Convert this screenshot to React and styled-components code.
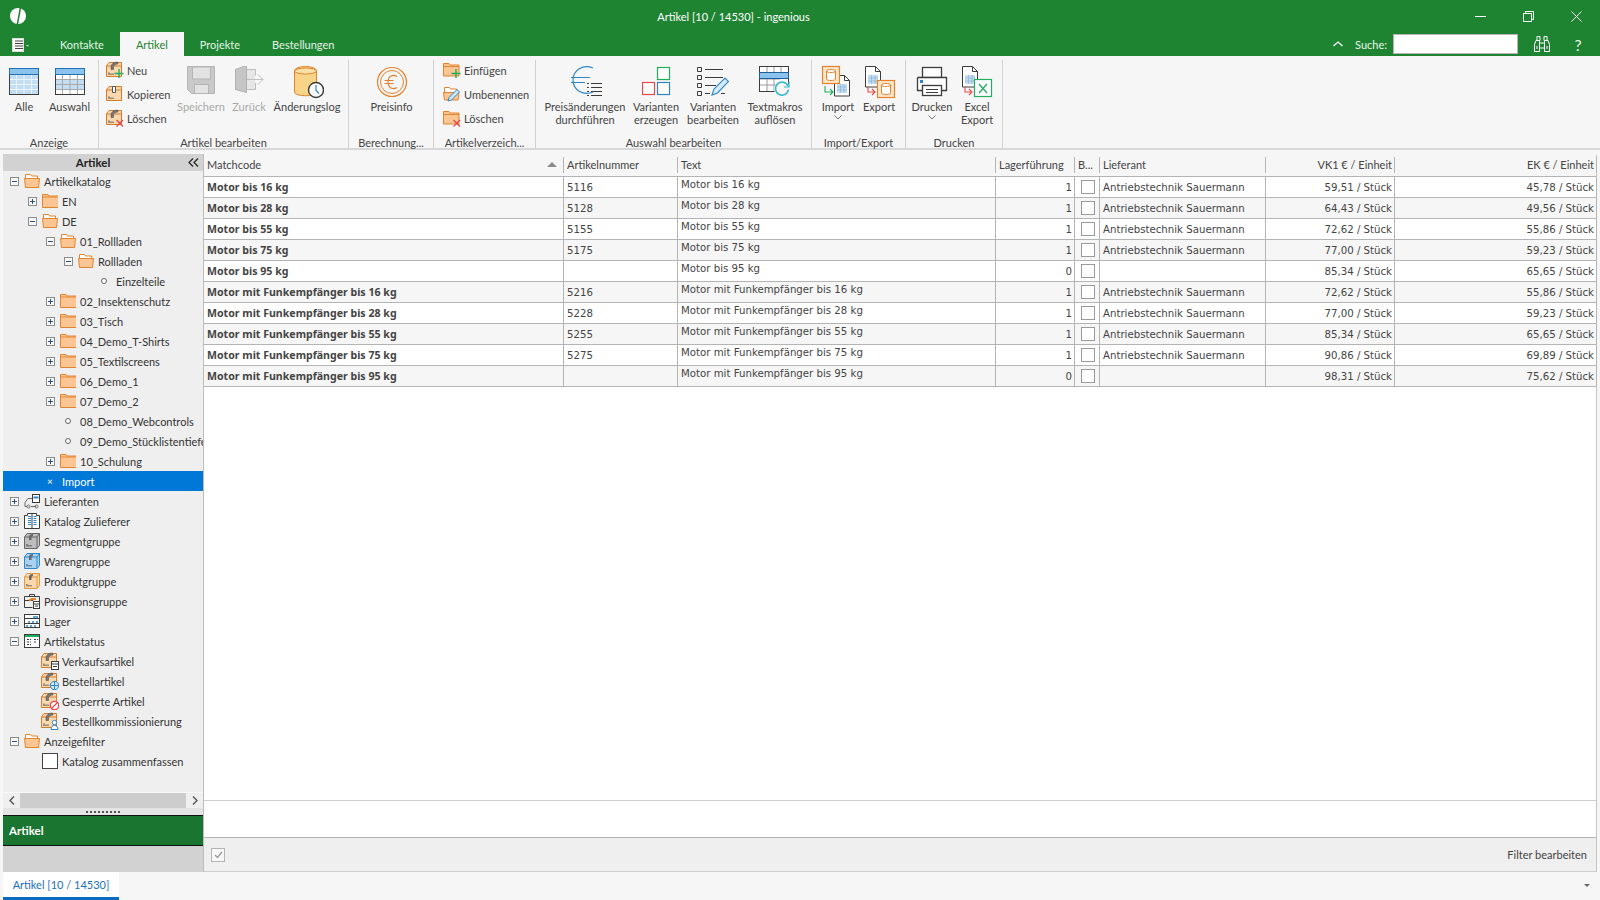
import React from 'react';
import styled, { createGlobalStyle } from 'styled-components';

const GlobalStyle = createGlobalStyle`
  html, body { margin: 0; padding: 0; height: 100%; overflow: hidden; }
  body { font-family: Lato, "Liberation Sans", sans-serif; font-size: 11px; color: #444; }
  svg { flex: none; }
`;

const GREEN = '#1e8432';

const Window = styled.div`
  width: 1600px;
  height: 900px;
  display: flex;
  flex-direction: column;
  background: #f6f6f6;
  overflow: hidden;
`;

const TitleBar = styled.header`
  height: 32px;
  flex: none;
  display: flex;
  align-items: center;
  background: ${GREEN};
  color: #fff;
`;

const Logo = styled.div`
  width: 36px;
  padding-left: 10px;
  display: flex;
  flex: none;
`;

const Title = styled.div`
  flex: 1;
  text-align: center;
  font-size: 11px;
  padding-right: 35px;
`;

const WinControls = styled.div`
  display: flex;
  flex: none;
  width: 144px;
`;

const WinButton = styled.div`
  width: 48px;
  height: 32px;
  display: flex;
  align-items: center;
  justify-content: center;
`;

const TabRow = styled.nav`
  height: 24px;
  flex: none;
  display: flex;
  align-items: stretch;
  background: ${GREEN};
`;

const AppMenu = styled.div`
  width: 44px;
  flex: none;
  display: flex;
  align-items: center;
  padding: 1px 0 0 12px;
  box-sizing: border-box;
`;

const Tab = styled.div`
  padding: 0 16px;
  display: flex;
  align-items: center;
  font-size: 11px;
  color: ${(p) => (p.$active ? GREEN : '#e4f4e6')};
  background: ${(p) => (p.$active ? '#f6f6f6' : 'transparent')};
`;

const TabTools = styled.div`
  margin-left: auto;
  display: flex;
  align-items: center;
  padding-right: 4px;
  color: #e8f6ea;
`;

const SearchLabel = styled.span`
  margin: 0 6px 0 12px;
  font-size: 11px;
`;

const SearchInput = styled.div`
  width: 123px;
  height: 18px;
  background: #fff;
  border: 1px solid #b5b5b5;
`;

const ToolIcon = styled.div`
  width: 36px;
  display: flex;
  justify-content: center;
  font-size: 16px;
  margin-left: ${(p) => p.$ml || 0}px;
`;

const Ribbon = styled.div`
  height: 94px;
  flex: none;
  display: flex;
  padding-top: 4px;
  box-sizing: border-box;
  background: #f6f6f6;
  border-bottom: 2px solid #d8d8d8;
`;

const Group = styled.section`
  width: ${(p) => p.$w}px;
  height: 88px;
  box-sizing: border-box;
  flex: none;
  display: flex;
  flex-direction: column;
  border-right: 1px solid #d2d2d2;
`;

const GroupBody = styled.div`
  height: 76px;
  flex: none;
  display: flex;
  padding-left: ${(p) => p.$pad || 0}px;
`;

const GroupLabel = styled.div`
  height: 12px;
  line-height: 14px;
  text-align: center;
  font-size: 11px;
  white-space: nowrap;
`;

const LargeButton = styled.div`
  width: ${(p) => p.$w}px;
  flex: none;
  display: flex;
  flex-direction: column;
  align-items: center;
  color: ${(p) => (p.$disabled ? '#a9a9a9' : '#444')};
`;

const LargeIcon = styled.div`
  height: 40px;
  padding-top: 3px;
  box-sizing: border-box;
  display: flex;
  align-items: center;
  justify-content: center;
`;

const LargeText = styled.div`
  font-size: 11px;
  line-height: 13px;
  text-align: center;
  white-space: pre-line;
`;

const Caret = styled.div`
  height: 10px;
  display: flex;
  justify-content: center;
  padding-top: 2px;
`;

const SmallColumn = styled.div`
  width: ${(p) => p.$w}px;
  flex: none;
  display: flex;
  flex-direction: column;
  gap: 2px;
  margin-top: -1px;
`;

const SmallButton = styled.div`
  height: 22px;
  display: flex;
  align-items: center;
  gap: 3px;
  font-size: 11px;
  white-space: nowrap;
`;

const Main = styled.main`
  flex: 1;
  min-height: 0;
  display: flex;
  padding: 4px 3px 0;
`;

const Sidebar = styled.aside`
  width: 200px;
  flex: none;
  display: flex;
  flex-direction: column;
  background: #efefef;
  border-right: 1px solid #bdbdbd;
`;

const SideHead = styled.div`
  height: 17px;
  flex: none;
  display: flex;
  align-items: center;
  background: #d2d2d2;
  color: #222;
`;

const SideTitle = styled.div`
  flex: 1;
  text-align: center;
  font-weight: 700;
  font-size: 11.5px;
`;

const CollapseBtn = styled.div`
  width: 20px;
  display: flex;
  justify-content: center;
`;

const Tree = styled.div`
  flex: 1;
  min-height: 0;
  overflow: hidden;
`;

const TreeRow = styled.div`
  height: 20px;
  display: flex;
  align-items: center;
  padding-left: ${(p) => 5 + p.$level * 18}px;
  white-space: nowrap;
  color: ${(p) => (p.$selected ? '#fff' : '#333')};
  background: ${(p) => (p.$selected ? '#0078d7' : 'transparent')};
`;

const Expander = styled.span`
  width: 9px;
  height: 9px;
  flex: none;
  margin: 0 5px 0 2px;
  box-sizing: border-box;
  border: 1px solid #8c8c8c;
  background: #f7f7f7;
  position: relative;
  visibility: ${(p) => (p.$kind ? 'visible' : 'hidden')};
  &::before {
    content: "";
    position: absolute;
    left: 1px;
    right: 1px;
    top: 3px;
    height: 1px;
    background: #33507a;
  }
  &::after {
    content: "";
    display: ${(p) => (p.$kind === 'plus' ? 'block' : 'none')};
    position: absolute;
    top: 1px;
    bottom: 1px;
    left: 3px;
    width: 1px;
    background: #33507a;
  }
`;

const NodeIcon = styled.span`
  width: 16px;
  height: 16px;
  flex: none;
  margin-right: 4px;
  display: flex;
  align-items: center;
  justify-content: center;
`;

const Dot = styled.span`
  width: 4px;
  height: 4px;
  border: 1px solid #666;
  background: #fff;
  border-radius: 50%;
`;

const Mark = styled.span`
  font-size: 10px;
  line-height: 10px;
  color: #fff;
`;

const CheckNode = styled.span`
  width: 16px;
  height: 16px;
  flex: none;
  box-sizing: border-box;
  background: #fff;
  border: 1px solid #444;
`;

const HScroll = styled.div`
  height: 15px;
  flex: none;
  display: flex;
  align-items: center;
  border-top: 1px solid #f8f8f8;
`;

const ScrollArrow = styled.div`
  width: 17px;
  display: flex;
  justify-content: center;
`;

const ScrollThumb = styled.div`
  flex: 1;
  height: 15px;
  background: #cdcdcd;
`;

const Splitter = styled.div`
  height: 7px;
  flex: none;
  display: flex;
  align-items: center;
  justify-content: center;
  background: #e4e4e4;
  &::before {
    content: "";
    width: 35px;
    height: 2px;
    background: repeating-linear-gradient(90deg, #555 0 2px, transparent 2px 4px);
  }
`;

const NavBand = styled.div`
  height: 29px;
  flex: none;
  display: flex;
  align-items: center;
  padding-left: 6px;
  background: #1a7530;
  border-top: 1px solid #111;
  border-bottom: 1px solid #111;
  color: #fff;
  font-weight: 700;
  font-size: 11.5px;
`;

const NavRest = styled.div`
  height: 26px;
  flex: none;
  background: #d2d2d2;
`;

const Content = styled.div`
  flex: 1;
  min-width: 0;
  display: flex;
  flex-direction: column;
  margin-top: 1px;
  background: #fff;
  border-right: 1px solid #c4c4c4;
`;

const COLS = '360px 114px 318px 79px 25px 166px 129px 202px';

const HeadRow = styled.div`
  display: grid;
  grid-template-columns: ${COLS};
  height: 22px;
  flex: none;
  box-sizing: border-box;
  background: #f6f6f6;
  border-bottom: 1px solid #b4b4b4;
`;

const HeadCell = styled.div`
  position: relative;
  padding: 0 ${(p) => (p.$right ? 2 : 3)}px 0 3px;
  line-height: 15px;
  margin: 2px 0 3px;
  border-right: 1px solid #b4b4b4;
  text-align: ${(p) => (p.$right ? 'right' : 'left')};
  font-size: 11px;
  white-space: nowrap;
  overflow: hidden;
`;

const SortArrow = styled.span`
  position: absolute;
  right: 6px;
  top: 5px;
  border-left: 5px solid transparent;
  border-right: 5px solid transparent;
  border-bottom: 5px solid #8c8c8c;
`;

const DataRow = styled.div`
  display: grid;
  grid-template-columns: ${COLS};
  height: 21px;
  box-sizing: border-box;
  background: ${(p) => (p.$alt ? '#f6f6f6' : '#fff')};
  border-bottom: 1px solid #b4b4b4;
`;

const Cell = styled.div`
  padding: ${(p) => (p.$bold || p.$top ? 0 : 1)}px ${(p) => (p.$right ? 2 : 3)}px 0 3px;
  display: flex;
  align-items: ${(p) => (p.$top ? 'flex-start' : 'center')};
  justify-content: ${(p) => (p.$right ? 'flex-end' : 'flex-start')};
  border-right: 1px solid #b4b4b4;
  font-family: ${(p) => (p.$bold ? '"Noto Sans"' : '"DejaVu Sans"')}, sans-serif;
  font-size: ${(p) => (p.$bold ? '10.6px' : '10.2px')};
  line-height: ${(p) => (p.$top ? '16px' : '19px')};
  font-weight: ${(p) => (p.$bold ? 700 : 400)};
  white-space: nowrap;
  overflow: hidden;
  color: #444;
`;

const RowCheck = styled.span`
  width: 14px;
  height: 14px;
  margin: -1px 0 0 3px;
  box-sizing: border-box;
  background: #fff;
  border: 1px solid #9a9a9a;
`;

const GridBody = styled.div`
  flex: 1;
  min-height: 0;
  border-bottom: 1px solid #cfcfcf;
`;

const EmptyStrip = styled.div`
  height: 36px;
  flex: none;
  border-bottom: 1px solid #b4b4b4;
`;

const FilterBar = styled.div`
  height: 33px;
  flex: none;
  display: flex;
  align-items: center;
  justify-content: space-between;
  padding: 0 9px 0 7px;
  background: #efefef;
  border-bottom: 1px solid #cfcfcf;
`;

const FilterCheck = styled.span`
  width: 14px;
  height: 14px;
  box-sizing: border-box;
  border: 1px solid #b4b4b4;
  background: #f8f8f8;
  display: flex;
  align-items: center;
  justify-content: center;
`;

const StatusBar = styled.footer`
  height: 28px;
  flex: none;
  display: flex;
  align-items: stretch;
  padding-left: 3px;
  background: #f6f6f6;
`;

const DocTab = styled.div`
  width: 116px;
  box-sizing: border-box;
  display: flex;
  align-items: center;
  justify-content: center;
  background: #fff;
  border-bottom: 3px solid #0a6cc0;
  color: #1a6fc0;
  font-size: 11px;
`;

const StatusDrop = styled.div`
  margin-left: auto;
  width: 16px;
  display: flex;
  align-items: center;
  padding-bottom: 1px;
  &::before {
    content: "";
    border-left: 3px solid transparent;
    border-right: 3px solid transparent;
    border-top: 3px solid #666;
  }
`;

/* ---- drawings ---- */

const Svg = ({ s = 32, w, h, children }) => (
  <svg width={w || s} height={h || s} viewBox={`0 0 ${w || s} ${h || s}`} fill="none">{children}</svg>
);

const DARK = '#3c3c3c';
const ORANGE = '#e4832f';
const BLUE = '#2e86c8';
const RED = '#e8474b';
const GR = '#1fae5b';

const SheetIcon = ({ all }) => (
  <Svg w={30} h={30}>
    <rect x="0.5" y="1.5" width="29" height="26" fill={all ? '#c3def2' : '#fff'} stroke={DARK} />
    {!all && <rect x="1" y="12" width="28" height="10" fill="#c3def2" />}
    <rect x="0.5" y="1.5" width="29" height="6" fill="#8cc3ec" stroke="#2372b8" />
    <path d="M1 12.5h28M1 17.5h28M1 22.5h28M7.5 8v19M15 8v19M22.5 8v19" stroke={all ? '#eaf4fb' : '#a9a9a9'} />
  </Svg>
);

const Overlay = ({ kind }) => {
  if (kind === 'plus') return <path d="M13 8v9M8.500 12.500h9" stroke={GR} strokeWidth="1.400" />;
  if (kind === 'x') return <path d="M10.500 11l6.500 6.500M17 11l-6.500 6.500" stroke={RED} strokeWidth="1.300" />;
  if (kind === 'calc') return <g><rect x="10.500" y="9.500" width="7" height="8" fill="#fff" stroke={DARK} /><path d="M11 12h6M12 14.500h4" stroke={DARK} /></g>;
  if (kind === 'globe') return <g><circle cx="13.500" cy="13.500" r="4.200" fill="#cfe6f7" stroke={BLUE} /><path d="M9.500 13.500h8M13.500 9.500v8" stroke={BLUE} /></g>;
  if (kind === 'ban') return <g><circle cx="13.500" cy="13.500" r="4.200" fill="#fff" stroke={RED} strokeWidth="1.300" /><path d="M10.500 16.500l6-6" stroke={RED} strokeWidth="1.300" /></g>;
  if (kind === 'person') return <g><circle cx="13.500" cy="10.500" r="2.200" fill="#fff" stroke={BLUE} /><path d="M10 17.500c.3-3 1.400-4 3.500-4s3.200 1 3.500 4z" fill="#fff" stroke={BLUE} /></g>;
  return null;
};

const BoxIcon = ({ overlay, straight }) => (
  <Svg s={18}>
    <path d="M.5 5L3 1.500h12.500v14H.5z" fill="#fbd8ad" stroke="#d87a2c" />
    <path d="M.5 5H15" stroke="#d87a2c" />
    {straight
      ? <path d="M6.500 1.500h3v6h-3z" fill="#fff" stroke="#555" />
      : <path d="M5 5.500C5.500 3 7.500 1 11.500 1l.5 2C9.500 3 8 4.200 7.500 5.500v3H5z" fill="#777" stroke="#555" strokeWidth=".6" />}
    <path d="M3 11.500v2.500M5 12.500v1.500M7 12.500v1.500" stroke="#444" />
    <Overlay kind={overlay} />
  </Svg>
);

const SegBox = ({ line, fill }) => (
  <Svg s={16}>
    <path d="M.5 4L3 .5h12.500v12l-2.500 3H.5z" fill={fill} stroke={line} />
    <path d="M.5 4H13v11.500M13 4l2.500-3.500" stroke={line} />
    <path d="M5 4c0-2 1.500-3 4-3v1.500L7.500 4v3H5z" fill="#666" />
    <path d="M3 11v2.500M5 12v1.500M7 12v1.500" stroke="#444" />
  </Svg>
);

const FolderIcon = ({ open, overlay, pen }) => (
  <Svg s={18}>
    {open ? (
      <g>
        <path d="M1.500 8V2.500h5l1 1.500h6V8" fill="#fff" stroke={ORANGE} />
        <path d="M.5 7.500h15.500l-1 7.500H1.500z" fill="#fbc795" stroke={ORANGE} />
      </g>
    ) : (
      <g>
        <path d="M.5 15V2.500h5.500l1 1.500h9v11z" fill="#fcc694" stroke={ORANGE} />
        <path d="M.5 5.500h15.500" stroke={ORANGE} />
      </g>
    )}
    {pen && <path d="M5 16l1-3.500 8-8 2.500 2.500-8 8z" fill="#cfe6f7" stroke={BLUE} />}
    <Overlay kind={overlay} />
  </Svg>
);

const TreeFolder = ({ open }) => (
  <Svg s={16}>
    {open ? (
      <g>
        <path d="M1.500 6V1.500h5l1 1.500h6V6" fill="#fff" stroke={ORANGE} />
        <path d="M.5 5.500h15l-1 9h-13z" fill="#fcc694" stroke={ORANGE} />
      </g>
    ) : (
      <g>
        <path d="M.5 14.500V1.500h5.500l1 1.500h9.500v11.500z" fill="#fcc694" stroke={ORANGE} />
        <path d="M.5 4h15.500" stroke={ORANGE} />
      </g>
    )}
  </Svg>
);

const SaveIcon = () => (
  <Svg>
    <g transform="translate(0 -3)">
      <path d="M2.500 3.500h27v27h-23l-4-4z" fill="#c9c9c9" stroke="#b5b5b5" />
      <rect x="7.500" y="4" width="18" height="12" fill="#e2e2e2" stroke="#b5b5b5" />
      <rect x="9.500" y="21.500" width="14" height="9" fill="#e2e2e2" stroke="#b5b5b5" />
    </g>
  </Svg>
);

const BackIcon = () => (
  <Svg>
    <g transform="translate(-1 -3)">
      <path d="M3.500 6.500l11-4v27l-11-3z" fill="#c6c6c6" stroke="#b0b0b0" />
      <path d="M14.500 6.500h9v6M23.500 20v6.500h-9" fill="#e4e4e4" stroke="#bdbdbd" />
      <rect x="15" y="7" width="8" height="19" fill="#e6e6e6" />
      <path d="M15 16.500h16M26 11.500l5 5-5 5" stroke="#c0c0c0" />
    </g>
  </Svg>
);

const LogIcon = () => (
  <Svg w={34} h={34}>
    <path d="M4.500 6c0-6 22-6 22 0v21c0 5-22 5-22 0z" fill="#f8d488" stroke={ORANGE} />
    <ellipse cx="15.500" cy="6" rx="11" ry="3" fill="#fbe1a8" stroke={ORANGE} />
    <circle cx="26" cy="25" r="7.500" fill="#fff" stroke={DARK} strokeWidth="1.400" />
    <path d="M26 20v5.500l3 3" stroke={BLUE} strokeWidth="1.200" />
  </Svg>
);

const EuroCoin = () => (
  <Svg>
    <circle cx="16" cy="16" r="14.500" stroke={ORANGE} strokeWidth="1.200" />
    <circle cx="16" cy="16" r="11.500" stroke={ORANGE} />
    <path d="M21 10.500c-4-2.500-9-.5-9 5.500s5 8 9 5.500M8.500 14.500h9M8.500 17.500h9" stroke={ORANGE} strokeWidth="1.200" />
  </Svg>
);

const EuroList = () => (
  <Svg w={34} h={34}>
    <path d="M25 3C15-1 5 5 5 15s10 16 20 12" stroke={BLUE} strokeWidth="1.200" />
    <path d="M3 12.500h19M3 17.500h14" stroke={BLUE} strokeWidth="1.200" />
    <path d="M19 18.500h2M23 18.500h11M19 22.500h2M23 22.500h11M19 26.500h2M23 26.500h11M19 30.500h2M23 30.500h11" stroke={DARK} strokeWidth="1.200" />
  </Svg>
);

const VariantSquares = () => (
  <Svg w={29} h={32}>
    <rect x="15.500" y="1.500" width="12" height="12" fill="#fff" stroke={GR} strokeWidth="1.200" />
    <rect x="0.500" y="16.500" width="12" height="12" fill="#fff" stroke={RED} strokeWidth="1.200" />
    <rect x="15.500" y="16.500" width="12" height="12" fill="#fff" stroke={BLUE} strokeWidth="1.200" />
  </Svg>
);

const VariantEdit = () => (
  <Svg w={32} h={32}>
    <path d="M.5 1.500h4v4h-4zM.5 9.500h4v4h-4zM.5 17.500h4v4h-4zM.5 25.500h4v4h-4z" stroke={DARK} />
    <path d="M8 3.500h18M8 11.500h18M8 19.500h11M8 27.500h5M24 27.500h4" stroke={DARK} strokeWidth="1.200" />
    <path d="M15 29l2-6L28 12l3.500 3.500L20.500 27z" fill="#d7ecfa" stroke={BLUE} strokeWidth="1.100" />
  </Svg>
);

const MacroIcon = () => (
  <Svg w={32} h={34}>
    <rect x="0.500" y="1.500" width="29" height="25" fill="#fff" stroke={DARK} />
    <path d="M8 2v24M15 2v24M22 2v5M1 20h28M1 14h20" stroke="#9a9a9a" />
    <rect x="0.500" y="7.500" width="29" height="6" fill="#8cc3ec" stroke="#1f5f9c" />
    <circle cx="23" cy="24" r="8" fill="#f6f6f6" />
    <path d="M29 21a6.500 6.500 0 1 0 .5 3.500" stroke="#2fb6d0" strokeWidth="1.500" />
    <path d="M30 16.500v5.500h-5" stroke="#2fb6d0" strokeWidth="1.200" />
  </Svg>
);

const DocCorner = ({ x, y }) => (
  <g transform={`translate(${x} ${y})`}>
    <path d="M.5.500h10l5 5V21H.5z" fill="#fff" stroke={DARK} />
    <path d="M10.500.500v5h5" stroke={DARK} />
    <rect x="3" y="9" width="10" height="9" fill="#c3def2" />
    <path d="M3 12h10M3 15h10M6.500 9v9M10 9v9" stroke="#8fb3cf" strokeWidth=".7" />
  </g>
);

const DbSquare = ({ x, y }) => (
  <g transform={`translate(${x} ${y})`}>
    <rect x=".5" y=".5" width="17" height="17" fill="#fbe6c8" stroke={ORANGE} strokeWidth="1.200" />
    <path d="M4.500 5c0-2 9-2 9 0v8c0 2-9 2-9 0z" fill="#fff" stroke={ORANGE} />
    <path d="M4.500 5c0 2 9 2 9 0" stroke={ORANGE} />
  </g>
);

const ImportIcon = () => (
  <Svg w={34} h={34}>
    <DocCorner x={13} y={10} />
    <DbSquare x={1} y={1} />
    <path d="M4 21v6h7M9 24l3 3-3 3" stroke={GR} strokeWidth="1.100" />
  </Svg>
);

const ExportIcon = () => (
  <Svg w={34} h={34}>
    <DocCorner x={3} y={1} />
    <DbSquare x={15} y={15} />
    <path d="M6 22v5h7M10 24l3 3-3 3" stroke={RED} strokeWidth="1.100" />
  </Svg>
);

const ExcelIcon = () => (
  <Svg w={34} h={34}>
    <DocCorner x={2} y={1} />
    <rect x="14.500" y="14.500" width="17" height="17" fill="#fff" stroke={GR} strokeWidth="1.200" />
    <path d="M19 19l8 9M27 19l-8 9" stroke={GR} strokeWidth="1.300" />
    <path d="M5 22v5h7M9 24l3 3-3 3" stroke={RED} strokeWidth="1.100" />
  </Svg>
);

const PrinterIcon = () => (
  <Svg w={34} h={34}>
    <rect x="7.500" y="2.500" width="19" height="10" fill="#fff" stroke={DARK} strokeWidth="1.300" />
    <path d="M2.500 12.500h29v13h-5M7.500 25.500h-5v-13" fill="#fff" stroke={DARK} strokeWidth="1.300" />
    <rect x="7.500" y="20.500" width="19" height="10" fill="#fff" stroke={DARK} strokeWidth="1.300" />
    <path d="M11 24.500h12M11 27.500h12" stroke={DARK} />
    <rect x="5" y="15" width="3" height="3" fill={BLUE} />
  </Svg>
);

const Chevron = ({ color = '#777' }) => (
  <svg width="8" height="5" viewBox="0 0 8 5" fill="none"><path d="M.5.500L4 4 7.500.500" stroke={color} /></svg>
);

const TruckIcon = () => (
  <Svg s={16}>
    <rect x="8.500" y="1.500" width="7" height="8" fill="#fff" stroke={DARK} />
    <path d="M9.500 4.500h5" stroke={BLUE} strokeWidth="2" />
    <path d="M8 5.500H4l-3 4v4h2M7 13.500h5" stroke="#666" />
    <circle cx="4.500" cy="13.500" r="1.500" stroke="#666" />
    <circle cx="12.500" cy="13.500" r="1.500" stroke="#666" />
  </Svg>
);

const CatalogIcon = () => (
  <Svg s={16}>
    <path d="M.5 2.500h3V.5h9v2h3v13H.5z" fill="#fff" stroke={DARK} />
    <path d="M8 1v14" stroke={DARK} />
    <path d="M4 3.500h3M4 5.500h3M4 7.500h3M4 9.500h3M4 11.500h3M9.500 3.500h3M9.500 5.500h3M9.500 7.500h3M9.500 9.500h3M9.500 11.500h3" stroke={BLUE} />
  </Svg>
);

const CommissionIcon = () => (
  <Svg s={16}>
    <path d="M5.500 3V1.500h5V3" stroke={DARK} />
    <path d="M.5 3.500h15v5M8.500 14.500h-8v-11" stroke={DARK} />
    <path d="M1 7.500h8" stroke={DARK} />
    <path d="M5 7.500l3-1.500h4" stroke={ORANGE} strokeWidth="2" />
    <rect x="9.500" y="8.500" width="6" height="7" fill="#fff" stroke={DARK} />
    <path d="M10 11h5M11 13h3" stroke={DARK} />
  </Svg>
);

const StockIcon = () => (
  <Svg s={16}>
    <rect x=".5" y="1.500" width="15" height="13" fill="#fff" stroke={DARK} />
    <path d="M1 5.500h14M1 10.500h14" stroke={DARK} />
    <path d="M9 4h5M4 9h2M8 9h2M12 9h2M2 13h2M6 13h2M10 13h2" stroke={BLUE} strokeWidth="1.400" />
  </Svg>
);

const StatusGridIcon = () => (
  <Svg s={16}>
    <rect x=".5" y="1.500" width="15" height="13" fill="#fff" stroke={DARK} />
    <path d="M1 3h14" stroke={GR} strokeWidth="2" />
    <path d="M3 6.500h2M6 6.500h1M10 6.500h2M13 6.500h1M3 9h2M6 9h1M10 9h2M3 11.500h2M6 11.500h1" stroke={DARK} />
  </Svg>
);

const Binoculars = () => (
  <svg width="16" height="18" viewBox="0 0 16 18" fill="none" stroke="#fff">
    <path d="M.5 9.500L2 5.500h3.500v11h-5zM15.500 9.500L14 5.500h-3.500v11h5zM5.500 8h5M5.500 13h5M3 5.500v-4h3v4M13 5.500v-4h-3v4M3 11v3M13 11v3" />
  </svg>
);

/* ---- data ---- */

const tree = [
  { l: 0, e: 'minus', icon: <TreeFolder open />, t: 'Artikelkatalog' },
  { l: 1, e: 'plus', icon: <TreeFolder />, t: 'EN' },
  { l: 1, e: 'minus', icon: <TreeFolder open />, t: 'DE' },
  { l: 2, e: 'minus', icon: <TreeFolder open />, t: '01_Rollladen' },
  { l: 3, e: 'minus', icon: <TreeFolder open />, t: 'Rollladen' },
  { l: 4, icon: <Dot />, t: 'Einzelteile' },
  { l: 2, e: 'plus', icon: <TreeFolder />, t: '02_Insektenschutz' },
  { l: 2, e: 'plus', icon: <TreeFolder />, t: '03_Tisch' },
  { l: 2, e: 'plus', icon: <TreeFolder />, t: '04_Demo_T-Shirts' },
  { l: 2, e: 'plus', icon: <TreeFolder />, t: '05_Textilscreens' },
  { l: 2, e: 'plus', icon: <TreeFolder />, t: '06_Demo_1' },
  { l: 2, e: 'plus', icon: <TreeFolder />, t: '07_Demo_2' },
  { l: 2, icon: <Dot />, t: '08_Demo_Webcontrols' },
  { l: 2, icon: <Dot />, t: '09_Demo_Stücklistentiefe' },
  { l: 2, e: 'plus', icon: <TreeFolder />, t: '10_Schulung' },
  { l: 1, icon: <Mark>×</Mark>, t: 'Import', selected: true },
  { l: 0, e: 'plus', icon: <TruckIcon />, t: 'Lieferanten' },
  { l: 0, e: 'plus', icon: <CatalogIcon />, t: 'Katalog Zulieferer' },
  { l: 0, e: 'plus', icon: <SegBox line="#666" fill="#bdbdbd" />, t: 'Segmentgruppe' },
  { l: 0, e: 'plus', icon: <SegBox line={BLUE} fill="#a9d3f2" />, t: 'Warengruppe' },
  { l: 0, e: 'plus', icon: <SegBox line="#e09a3c" fill="#fbd8ad" />, t: 'Produktgruppe' },
  { l: 0, e: 'plus', icon: <CommissionIcon />, t: 'Provisionsgruppe' },
  { l: 0, e: 'plus', icon: <StockIcon />, t: 'Lager' },
  { l: 0, e: 'minus', icon: <StatusGridIcon />, t: 'Artikelstatus' },
  { l: 1, icon: <BoxIcon overlay="calc" />, t: 'Verkaufsartikel' },
  { l: 1, icon: <BoxIcon overlay="globe" />, t: 'Bestellartikel' },
  { l: 1, icon: <BoxIcon overlay="ban" />, t: 'Gesperrte Artikel' },
  { l: 1, icon: <BoxIcon overlay="person" />, t: 'Bestellkommissionierung' },
  { l: 0, e: 'minus', icon: <TreeFolder open />, t: 'Anzeigefilter' },
  { l: 1, icon: <CheckNode />, t: 'Katalog zusammenfassen' },
];

const SAUER = 'Antriebstechnik Sauermann';
const rows = [
  ['Motor bis 16 kg', '5116', '1', SAUER, '59,51', '45,78'],
  ['Motor bis 28 kg', '5128', '1', SAUER, '64,43', '49,56'],
  ['Motor bis 55 kg', '5155', '1', SAUER, '72,62', '55,86'],
  ['Motor bis 75 kg', '5175', '1', SAUER, '77,00', '59,23'],
  ['Motor bis 95 kg', '', '0', '', '85,34', '65,65'],
  ['Motor mit Funkempfänger bis 16 kg', '5216', '1', SAUER, '72,62', '55,86'],
  ['Motor mit Funkempfänger bis 28 kg', '5228', '1', SAUER, '77,00', '59,23'],
  ['Motor mit Funkempfänger bis 55 kg', '5255', '1', SAUER, '85,34', '65,65'],
  ['Motor mit Funkempfänger bis 75 kg', '5275', '1', SAUER, '90,86', '69,89'],
  ['Motor mit Funkempfänger bis 95 kg', '', '0', '', '98,31', '75,62'],
];

function Large({ w, icon, text, disabled, caret }) {
  return (
    <LargeButton $w={w} $disabled={disabled}>
      <LargeIcon>{icon}</LargeIcon>
      <LargeText>{text}</LargeText>
      {caret && <Caret><Chevron /></Caret>}
    </LargeButton>
  );
}

function Small({ icon, text }) {
  return <SmallButton>{icon}{text}</SmallButton>;
}

export default function App() {
  return (
    <Window>
      <GlobalStyle />
      <TitleBar>
        <Logo>
          <svg width="16" height="16" viewBox="0 0 16 16">
            <circle cx="8" cy="8" r="8" fill="#fff" />
            <path d="M9.600 0L6.600 16H8.200L11.200 0z" fill={GREEN} />
          </svg>
        </Logo>
        <Title>Artikel [10 / 14530] - ingenious</Title>
        <WinControls>
          <WinButton>
            <svg width="11" height="11" stroke="#fff"><path d="M0 5.500h11" /></svg>
          </WinButton>
          <WinButton>
            <svg width="11" height="11" stroke="#fff" fill="none"><path d="M.5 2.500h8v8h-8zM2.500 2.500v-2h8v8h-2" /></svg>
          </WinButton>
          <WinButton>
            <svg width="11" height="11" stroke="#fff"><path d="M.5.500l10 10M10.500.500l-10 10" /></svg>
          </WinButton>
        </WinControls>
      </TitleBar>

      <TabRow>
        <AppMenu>
          <svg width="18" height="14" viewBox="0 0 18 14" fill="none">
            <rect x="0.500" y="0.500" width="11" height="13" fill="#fff" stroke="#ddd" />
            <path d="M3 3h8M3 5.500h8M3 8h8M3 10.500h8" stroke="#444" />
            <path d="M14 7h3l-1.500 1.500z" fill="#dff" />
          </svg>
        </AppMenu>
        <Tab>Kontakte</Tab>
        <Tab $active>Artikel</Tab>
        <Tab>Projekte</Tab>
        <Tab>Bestellungen</Tab>
        <TabTools>
          <svg width="10" height="6" viewBox="0 0 10 6" fill="none" stroke="#fff" strokeWidth="1.300"><path d="M.5 5L5 1l4.500 4" /></svg>
          <SearchLabel>Suche:</SearchLabel>
          <SearchInput />
          <ToolIcon $ml={6}><Binoculars /></ToolIcon>
          <ToolIcon>?</ToolIcon>
        </TabTools>
      </TabRow>

      <Ribbon>
        <Group $w={99}>
          <GroupBody $pad={3}>
            <Large w={42} icon={<SheetIcon all />} text="Alle" />
            <Large w={49} icon={<SheetIcon />} text="Auswahl" />
          </GroupBody>
          <GroupLabel>Anzeige</GroupLabel>
        </Group>
        <Group $w={250}>
          <GroupBody $pad={7}>
            <SmallColumn $w={70}>
              <Small icon={<BoxIcon overlay="plus" />} text="Neu" />
              <Small icon={<BoxIcon straight />} text="Kopieren" />
              <Small icon={<BoxIcon overlay="x" />} text="Löschen" />
            </SmallColumn>
            <Large w={50} disabled icon={<SaveIcon />} text="Speichern" />
            <Large w={46} disabled icon={<BackIcon />} text="Zurück" />
            <Large w={70} icon={<LogIcon />} text="Änderungslog" />
          </GroupBody>
          <GroupLabel>Artikel bearbeiten</GroupLabel>
        </Group>
        <Group $w={85}>
          <GroupBody>
            <Large w={85} icon={<EuroCoin />} text="Preisinfo" />
          </GroupBody>
          <GroupLabel>Berechnung...</GroupLabel>
        </Group>
        <Group $w={102}>
          <GroupBody $pad={9}>
            <SmallColumn $w={90}>
              <Small icon={<FolderIcon overlay="plus" />} text="Einfügen" />
              <Small icon={<FolderIcon open pen />} text="Umbenennen" />
              <Small icon={<FolderIcon overlay="x" />} text="Löschen" />
            </SmallColumn>
          </GroupBody>
          <GroupLabel>Artikelverzeich...</GroupLabel>
        </Group>
        <Group $w={276}>
          <GroupBody $pad={4}>
            <Large w={90} icon={<EuroList />} text={'Preisänderungen\ndurchführen'} />
            <Large w={52} icon={<VariantSquares />} text={'Varianten\nerzeugen'} />
            <Large w={62} icon={<VariantEdit />} text={'Varianten\nbearbeiten'} />
            <Large w={62} icon={<MacroIcon />} text={'Textmakros\nauflösen'} />
          </GroupBody>
          <GroupLabel>Auswahl bearbeiten</GroupLabel>
        </Group>
        <Group $w={94}>
          <GroupBody $pad={4}>
            <Large w={44} icon={<ImportIcon />} text="Import" caret />
            <Large w={38} icon={<ExportIcon />} text="Export" />
          </GroupBody>
          <GroupLabel>Import/Export</GroupLabel>
        </Group>
        <Group $w={97}>
          <GroupBody $pad={3}>
            <Large w={46} icon={<PrinterIcon />} text="Drucken" caret />
            <Large w={44} icon={<ExcelIcon />} text={'Excel\nExport'} />
          </GroupBody>
          <GroupLabel>Drucken</GroupLabel>
        </Group>
      </Ribbon>

      <Main>
        <Sidebar>
          <SideHead>
            <SideTitle>Artikel</SideTitle>
            <CollapseBtn>
              <svg width="11" height="9" viewBox="0 0 11 9" fill="none" stroke="#222" strokeWidth="1.200"><path d="M5 .5L1 4.500l4 4M10 .5L6 4.500l4 4" /></svg>
            </CollapseBtn>
          </SideHead>
          <Tree>
            {tree.map((n) => (
              <TreeRow key={n.t} $level={n.l} $selected={n.selected}>
                <Expander $kind={n.e} />
                <NodeIcon>{n.icon}</NodeIcon>
                {n.t}
              </TreeRow>
            ))}
          </Tree>
          <HScroll>
            <ScrollArrow>
              <svg width="6" height="9" fill="none" stroke="#555" strokeWidth="1.400"><path d="M5 .5L1 4.500l4 4" /></svg>
            </ScrollArrow>
            <ScrollThumb />
            <ScrollArrow>
              <svg width="6" height="9" fill="none" stroke="#555" strokeWidth="1.400"><path d="M1 .5l4 4-4 4" /></svg>
            </ScrollArrow>
          </HScroll>
          <Splitter />
          <NavBand>Artikel</NavBand>
          <NavRest />
        </Sidebar>

        <Content>
          <HeadRow>
            <HeadCell>Matchcode<SortArrow /></HeadCell>
            <HeadCell>Artikelnummer</HeadCell>
            <HeadCell>Text</HeadCell>
            <HeadCell>Lagerführung</HeadCell>
            <HeadCell>B...</HeadCell>
            <HeadCell>Lieferant</HeadCell>
            <HeadCell $right>VK1 € / Einheit</HeadCell>
            <HeadCell $right>EK € / Einheit</HeadCell>
          </HeadRow>
          <GridBody>
            {rows.map((r, i) => (
              <DataRow key={r[0]} $alt={i % 2 === 1}>
                <Cell $bold>{r[0]}</Cell>
                <Cell>{r[1]}</Cell>
                <Cell $top>{r[0]}</Cell>
                <Cell $right>{r[2]}</Cell>
                <Cell><RowCheck /></Cell>
                <Cell>{r[3]}</Cell>
                <Cell $right>{r[4]} / Stück</Cell>
                <Cell $right>{r[5]} / Stück</Cell>
              </DataRow>
            ))}
          </GridBody>
          <EmptyStrip />
          <FilterBar>
            <FilterCheck>
              <svg width="9" height="8" fill="none" stroke="#999" strokeWidth="1.300"><path d="M1 4l2.500 2.500L8 1" /></svg>
            </FilterCheck>
            Filter bearbeiten
          </FilterBar>
        </Content>
      </Main>

      <StatusBar>
        <DocTab>Artikel [10 / 14530]</DocTab>
        <StatusDrop />
      </StatusBar>
    </Window>
  );
}
